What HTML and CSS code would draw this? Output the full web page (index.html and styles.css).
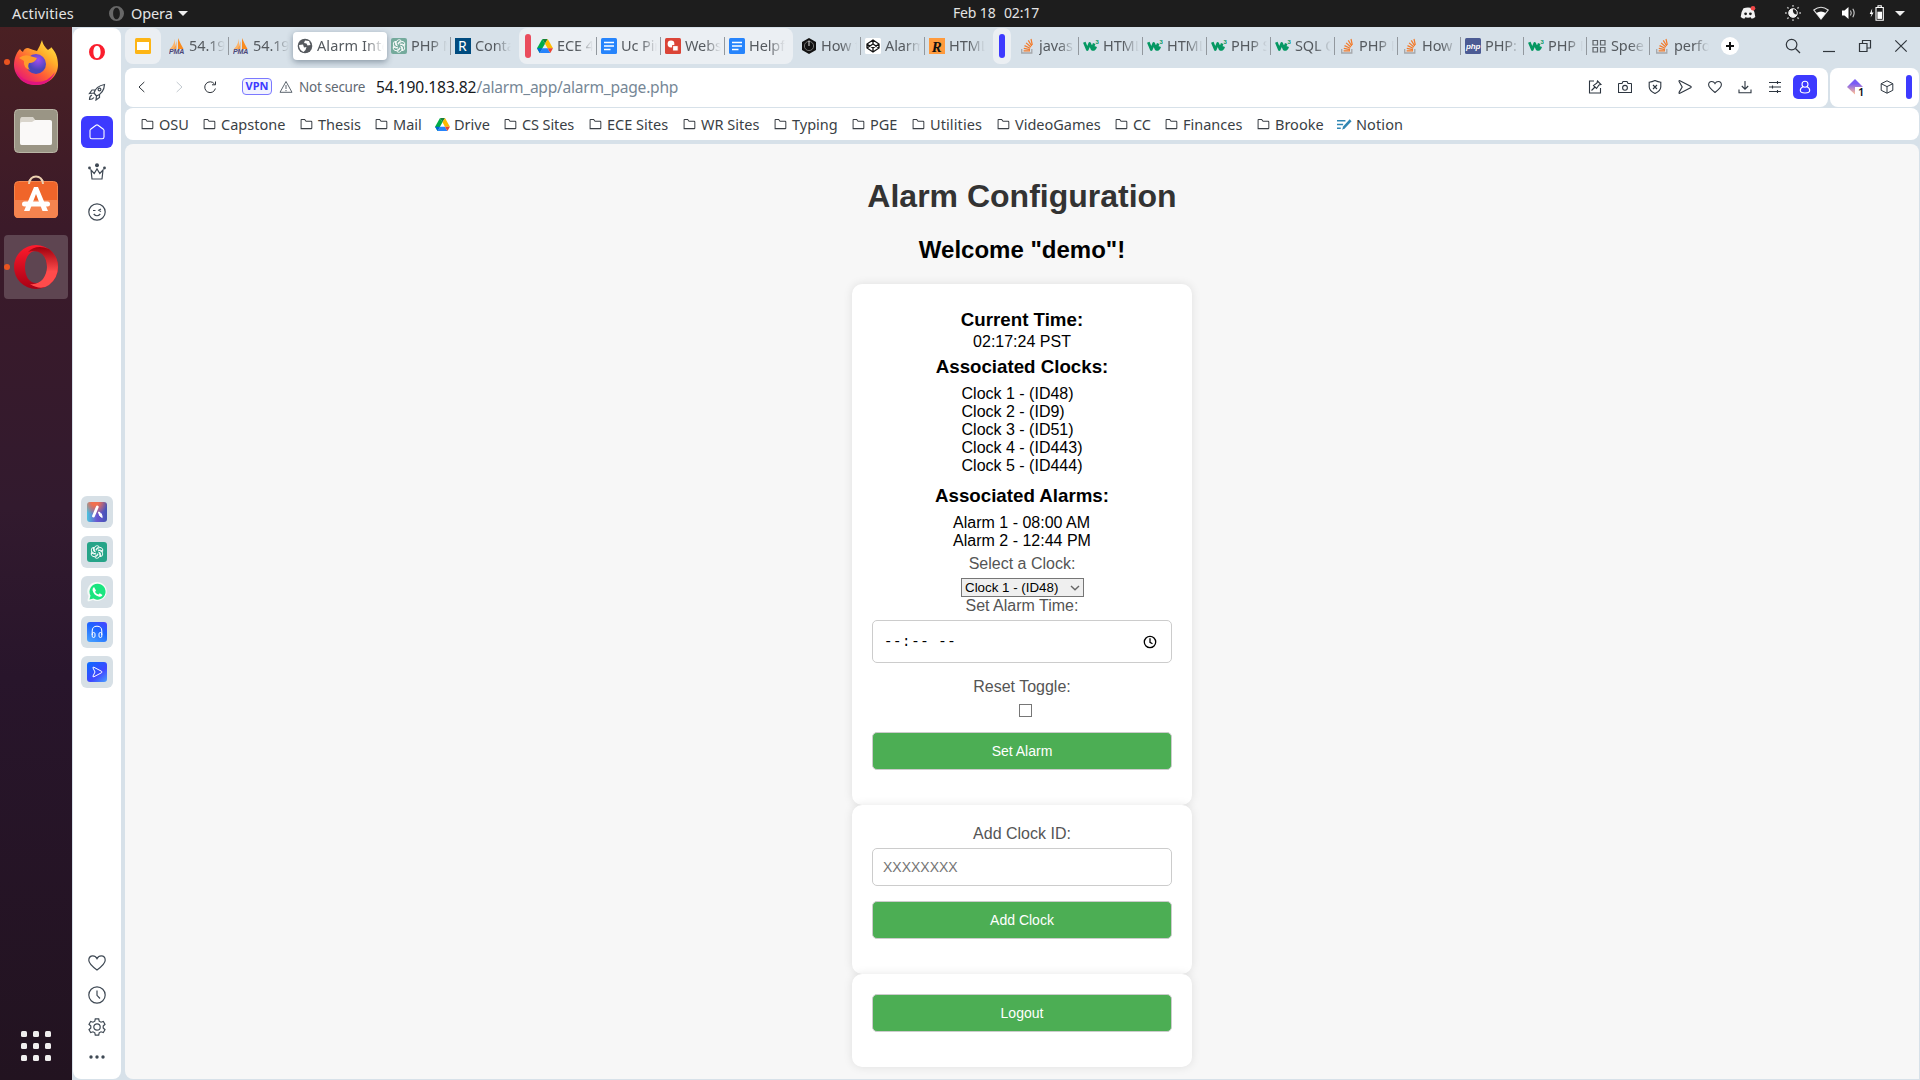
FILE: index.html
```html
<!DOCTYPE html>
<html lang="en">
<head>
<meta charset="utf-8">
<title>Alarm Interface</title>
<link rel="stylesheet" href="styles.css">
</head>
<body>
<svg class="defs" width="0" height="0">
  <defs>
    <linearGradient id="fx" x1="1" y1="0" x2="0.2" y2="1"><stop offset="0" stop-color="#fff44f"/><stop offset=".35" stop-color="#ffb02a"/><stop offset=".65" stop-color="#ff5a36"/><stop offset="1" stop-color="#e3107e"/></linearGradient>
    <radialGradient id="fxb" cx=".6" cy=".3"><stop offset="0" stop-color="#a04df0"/><stop offset="1" stop-color="#4a45b8"/></radialGradient>
    <linearGradient id="op" x1="0" y1="0" x2="0" y2="1"><stop offset="0" stop-color="#ff1b2d"/><stop offset="1" stop-color="#a70014"/></linearGradient>
    <linearGradient id="op2" x1="0" y1="0" x2="0" y2="1"><stop offset="0" stop-color="#a0000e"/><stop offset=".6" stop-color="#ff4b4b"/></linearGradient>
    <linearGradient id="kite" x1="0" y1="0" x2="0" y2="1"><stop offset=".3" stop-color="#7a5cf5"/><stop offset=".9" stop-color="#f5b69c"/></linearGradient>
    <symbol id="folder" viewBox="0 0 13 12"><path d="M.6 10.4V1.3Q.6.6 1.3.6H4.5L6 2.4H11.5Q12.3 2.4 12.3 3.2V9.7Q12.3 10.5 11.5 10.5H.6Z" fill="none" stroke="#3a3f45" stroke-width="1.1"/></symbol>
    <symbol id="drive" viewBox="0 0 16 14"><path d="M5.3 0H10.7L8 4.7Z" fill="#188038"/><path d="M5.3 0L0 9.3 2.7 14 8 4.7Z" fill="#00ac47"/><path d="M10.7 0L16 9.3H10.6L8 4.7Z" fill="#ffba00"/><path d="M0 9.3H5.4L2.7 14Z" fill="#0066da"/><path d="M5.4 9.3H10.6L13.3 14H2.7Z" fill="#2684fc"/><path d="M10.6 9.3H16L13.3 14Z" fill="#ea4335"/></symbol>
    <symbol id="pma" viewBox="0 0 16 16"><path d="M6 1Q5 7 .8 11H6Z" fill="#fbb46b"/><path d="M9 0V11H14.5Q12 7 9 0Z" fill="#f98b1e"/><path d="M7.5 3V11H4Q7 8 7.5 3Z" fill="#f6a04c"/><text x="0" y="15.6" class="pma-text">PMA</text></symbol>
    <symbol id="docs" viewBox="0 0 16 16"><rect width="16" height="16" rx="1.5" fill="#2684fc"/><path d="M3 4.5H13M3 8H13M3 11.5H9.5" stroke="#fff" stroke-width="1.7"/></symbol>
    <symbol id="draw" viewBox="0 0 16 16"><rect width="16" height="16" rx="1.5" fill="#db4437"/><circle cx="6" cy="6" r="3.4" fill="#fff"/><rect x="7.6" y="7.6" width="5.6" height="5.4" fill="#fff" stroke="#db4437"/></symbol>
    <symbol id="gpt" viewBox="0 0 16 16"><g fill="none" stroke="#fff" stroke-width=".9"><path d="M5.3 8V4.300A2.800 2.800 0 0 1 10.200 2.700L7.700 4.300V6.500"/><path d="M5.3 8V4.300A2.800 2.800 0 0 1 10.200 2.700L7.700 4.300V6.500" transform="rotate(60 8 8)"/><path d="M5.3 8V4.300A2.800 2.800 0 0 1 10.200 2.700L7.700 4.300V6.500" transform="rotate(120 8 8)"/><path d="M5.3 8V4.300A2.800 2.800 0 0 1 10.200 2.700L7.700 4.300V6.500" transform="rotate(180 8 8)"/><path d="M5.3 8V4.300A2.800 2.800 0 0 1 10.200 2.700L7.700 4.300V6.500" transform="rotate(240 8 8)"/><path d="M5.3 8V4.300A2.800 2.800 0 0 1 10.200 2.700L7.700 4.300V6.500" transform="rotate(300 8 8)"/></g></symbol>
    <symbol id="stack" viewBox="0 0 14 16"><path d="M1.7 11V15H11.8V11" fill="none" stroke="#a5a7aa" stroke-width="1.3"/><path d="M3.6 12.9H10M3.8 10.3L10 11.6M4.5 7.6L10.2 10.2M6.1 4.9L10.9 9M8.3 2.4L11.7 8M11 1L12.3 7" stroke="#f27a2a" stroke-width="1.2"/></symbol>
    <symbol id="w3" viewBox="0 0 16 16"><path d="M1.300 4.200L4.300 11.500 6.700 5.500 9 11 11.200 5.500M9 11Q11.500 12.500 12.700 8.500" fill="none" stroke="#059862" stroke-width="2.700" stroke-linejoin="round"/><text x="12.600" y="5.600" class="w3-text">3</text></symbol>
    <symbol id="opera" viewBox="0 0 16 16"><path fill-rule="evenodd" d="M8 0A8 8 0 1 0 8 16A8 8 0 1 0 8 0ZM8 1.8C10.3 1.8 11.6 4.6 11.6 8S10.3 14.2 8 14.2 4.4 11.4 4.4 8 5.7 1.8 8 1.8Z"/></symbol>
    <symbol id="heart" viewBox="0 0 18 16"><path d="M9 15C5 12 .8 8.7.8 5.2.8 2.500 2.600.9 4.800.9 6.700.9 8.100 1.900 9 3.600 9.900 1.900 11.300.9 13.200.9 15.400.9 17.200 2.500 17.200 5.200 17.200 8.700 13 12 9 15Z"/></symbol>
    <symbol id="send" viewBox="0 0 14 14"><path d="M1.200 1.800Q.5 0 2.400.9L12.600 6.200Q13.800 7 12.600 7.700L2.400 13Q.5 14 1.200 12.100L4.200 7Z"/></symbol>
  </defs>
</svg>

<header class="topbar">
  <span class="activities">Activities</span>
  <span class="appmenu"><svg class="o-gray" viewBox="0 0 16 16"><use href="#opera"/></svg><span class="appname">Opera</span><i class="caret"></i></span>
  <span class="clock"><span>Feb 18</span><span>02:17</span></span>
  <span class="tray">
    <svg class="t-discord" viewBox="0 0 16 14"><path d="M3.5 2.2Q8 .8 12.5 2.2 15.2 6 15.3 11 13.5 12.6 11.6 12.8L10.8 11.3Q8 12 5.2 11.3L4.4 12.8Q2.5 12.6.7 11 .8 6 3.5 2.2Z" fill="#f2f2f2"/><circle cx="5.600" cy="7.800" r="1.400" fill="#1d1d1d"/><circle cx="10.400" cy="7.800" r="1.400" fill="#1d1d1d"/><circle cx="13" cy="2.300" r="2.300" fill="#f04747"/></svg>
    <svg class="t-sun" viewBox="0 0 16 16"><circle cx="8" cy="8" r="4.300" fill="none" stroke="#f2f2f2"/><path d="M8 3.700A4.300 4.300 0 1 0 12.200 9.500Q7 9.500 8 3.700Z" fill="#f2f2f2"/><path d="M8 0V1.800M8 14.200V16M0 8H1.800M14.200 8H16M2.300 2.300L3.600 3.600M12.400 12.400L13.700 13.700M2.300 13.700L3.600 12.400M12.400 3.600L13.700 2.300" stroke="#bbb" stroke-width="1.400"/></svg>
    <svg class="t-wifi" viewBox="0 0 16 14"><path d="M.8 4Q8-1.600 15.200 4L8 13Z" fill="none" stroke="#ddd" stroke-width="1.100"/><path d="M3.300 7Q8 4 12.700 7L8 13Z" fill="#fff"/></svg>
    <svg class="t-vol" viewBox="0 0 16 14"><path d="M1 4.500H3.500L7.500 1V13L3.500 9.500H1Z" fill="#fff"/><path d="M9.500 4.500Q11 7 9.500 9.500M11.800 2.800Q14.500 7 11.800 11.200" fill="none" stroke="#ccc" stroke-width="1.100"/></svg>
    <svg class="t-bat" viewBox="0 0 16 16"><path d="M3.200 3.500L.7 9H2.500L1.600 12.500 4.600 7.500H2.800Z" fill="#fff"/><path d="M7 2.500H14.300V15.300H7ZM9 .8H12.300V2.500H9Z" fill="none" stroke="#fff" stroke-width="1.100"/><rect x="8.400" y="6.700" width="4.600" height="7.200" fill="#fff"/></svg>
    <i class="caret t-caret"></i>
  </span>
</header>

<div class="desktop">
  <nav class="dock">
    <div class="tile running"><svg viewBox="0 0 44 46"><path d="M28 1C29 6 31 8 34 11 37 9 37 9 37 8 42 13 44 19 44 26 44 37 34 46 22 46S0 37 0 26C0 20 2 14 6 10Q7 12 9 13 10 9 14 9 19 11 23 12 26 7 28 1Z" fill="url(#fx)"/><circle cx="22" cy="25" r="10" fill="url(#fxb)"/><path d="M5 19Q10 15 16 17L23 19Q21 24 15 24 13 28 16 31 9 29 10 22Q7 20 5 19Z" fill="#ff9b2b"/><path d="M2 32Q8 43 22 43 35 43 41 33 36 46 22 46 6 46 2 32Z" fill="#e0157f"/></svg></div>
    <div class="tile"><svg viewBox="0 0 44 44"><rect x=".5" y=".5" width="43" height="43" rx="4" fill="#9a9585" stroke="#b9b5a5"/><path d="M6 12Q6 8 8 8H19L22 12H36Q38 12 38 14V34Q38 36 36 36H8Q6 36 6 34Z" fill="#d9d5cc"/><path d="M6 15Q6 13 8 13H18L21 11H36Q38 11 38 13V34Q38 36 36 36H8Q6 36 6 34Z" fill="#faf9f8"/></svg></div>
    <div class="tile"><svg viewBox="0 0 44 44"><path d="M15 9C15-1 29-1 29 9" fill="none" stroke="#ecd0b0" stroke-width="2"/><rect x=".5" y="6.500" width="43" height="36" rx="4" fill="#f0652a" stroke="#f4854c"/><path d="M0 25H44V38Q44 43 40 43H4Q0 43 0 38Z" fill="#f5844f"/><path d="M15 9C15 7 16 5 17 4M29 9C29 7 28 5 27 4" fill="none" stroke="#ecd0b0" stroke-width="2"/><path d="M20 12H24L34 36H28.500L22 19 15.500 36H10Z" fill="#fff"/><rect x="8" y="26.500" width="28" height="5" rx="2.500" fill="#fff"/></svg></div>
    <div class="tile running selected"><svg viewBox="0 0 44 44"><path fill-rule="evenodd" d="M22 0A22 22 0 1 0 22 44A22 22 0 1 0 22 0ZM22 6C29 6 33 13 33 22S29 38 22 38 11 31 11 22 15 6 22 6Z" fill="url(#op)"/><path d="M14 7Q22-1 35 4 44 11 44 22 44 33 35 40 27 46 16 39 24 40 29 34 33 28 33 22 33 14 28 9 22 4 14 7Z" fill="url(#op2)"/></svg></div>
    <div class="apps"><i></i><i></i><i></i><i></i><i></i><i></i><i></i><i></i><i></i></div>
  </nav>

  <div class="browser">
    <aside class="sidebar">
      <div class="side-top">
        <svg class="red" viewBox="0 0 16 16"><use href="#opera"/></svg>
        <svg class="line" viewBox="0 0 18 18"><path d="M6 10Q8 3 16.500 1.500 16 10 8.500 13ZM6 10L8.500 13M7 7H4L1.500 10.500 6 10M11.500 11.500V14.500L8 17 8.500 13M4 12Q1.500 13 1.500 16.500 4.500 16.500 6 14.500"/><circle cx="11.500" cy="6.500" r="1.400"/></svg>
        <span class="home"><svg viewBox="0 0 16 16"><path d="M1 6.500Q1 5.800 1.600 5.300L7 1.200Q8 .5 9 1.200L14.400 5.300Q15 5.800 15 6.500V13Q15 14.800 13.200 14.800H2.800Q1 14.800 1 13Z"/></svg></span>
        <svg class="line" viewBox="0 0 18 18"><path d="M3 7L4 16H14L15 7 11.800 10.500 9 6 6.200 10.500Z"/><g fill="#3f4954" stroke="none"><circle cx="9" cy="2.300" r="2"/><circle cx="1.500" cy="5" r="1.400"/><circle cx="16.500" cy="5" r="1.400"/></g></svg>
        <svg class="line" viewBox="0 0 18 18"><circle cx="9" cy="9" r="8.200"/><path d="M5 7.500H7.500M13 6L10.800 7.300 13 8.500M5.700 11Q9 14.500 12.300 11"/></svg>
      </div>
      <div class="side-apps">
        <span><svg class="aria" viewBox="0 0 20 20"><path d="M10.300 5L6.500 14" stroke="#fff" stroke-width="2.800" stroke-linecap="round"/><path d="M11.500 10Q14.800 10.500 15.200 15.500 12 14.500 11.500 10Z" fill="#fff" stroke="#fff" stroke-linejoin="round"/></svg></span>
        <span><svg class="gpt" viewBox="-2 -2 20 20"><use href="#gpt" width="16" height="16"/></svg></span>
        <span><svg viewBox="0 0 20 20"><path d="M10.500 0A9.500 9.500 0 1 1 6 18L0 20 1.500 14A9.500 9.500 0 0 1 10.500 0Z" fill="#f6faf8"/><path d="M10.500 1.700A8 8 0 1 1 6.500 16.600L2.500 17.600 3.500 13.600A8 8 0 0 1 10.500 1.700Z" fill="#19e57f"/><path d="M7 5L9 8.500 8 10Q9.500 12 11.500 12.500L12.800 11.300 15.500 13Q14.500 15.500 11.500 14.500 6.500 13 5.500 8 5.500 6 7 5Z" fill="#fff"/></svg></span>
        <span><svg class="blue" viewBox="0 0 20 20"><path d="M5.200 13V9Q5.200 4.200 10 4.200T14.800 9V13" /><rect x="5.200" y="10.500" width="2.800" height="5" rx="1.400"/><rect x="12" y="10.500" width="2.800" height="5" rx="1.400"/></svg></span>
        <span><svg class="blue play" viewBox="0 0 20 20"><path d="M6 6Q5.600 4.800 7 5.300L14.600 9.300Q15.600 10 14.600 10.700L7 14.700Q5.600 15.200 6 14L8 10Z"/></svg></span>
      </div>
      <div class="side-bottom">
        <svg class="line" viewBox="0 0 18 16"><use href="#heart"/></svg>
        <svg class="line" viewBox="0 0 18 18"><circle cx="9" cy="9" r="8.200"/><path d="M9 4.500V9.300L12 12.500"/></svg>
        <svg class="line" viewBox="0 0 18 18"><path d="M7.300.8H10.700L11.200 3.200 13 4.200 15.300 3.400 17 6.300 15.200 8V10L17 11.700 15.300 14.600 13 13.800 11.200 14.800 10.700 17.200H7.300L6.800 14.800 5 13.800 2.700 14.600 1 11.700 2.800 10V8L1 6.300 2.700 3.400 5 4.200 6.800 3.200Z"/><circle cx="9" cy="9" r="3.200"/></svg>
        <svg class="more" viewBox="0 0 18 4"><circle cx="3" cy="2" r="1.700"/><circle cx="9" cy="2" r="1.700"/><circle cx="15" cy="2" r="1.700"/></svg>
      </div>
    </aside>

    <div class="window">
      <div class="tabs">
        <span class="pinned"><svg viewBox="0 0 16 16"><rect width="16" height="16" rx="1.500" fill="#fdb515"/><rect x="2" y="4" width="12" height="8" fill="#fff"/></svg></span>
        <div class="tab"><svg><use href="#pma"/></svg><b>54.19</b></div>
        <div class="tab nosep"><svg><use href="#pma"/></svg><b>54.19</b></div>
        <div class="tab active"><svg viewBox="0 0 16 16"><circle cx="8" cy="8" r="7.300" fill="#55595e"/><path d="M2 7L6 6.500 7 9.500 9.500 9 8.500 12 6.500 14Q2 12 2 7ZM8 2.500L12 3 13.500 7 10.500 7.500 9.500 5.500 7 5Z" fill="#fff"/></svg><b>Alarm Inte</b></div>
        <div class="tab"><svg class="gptfav" viewBox="0 0 16 16"><use href="#gpt"/></svg><b>PHP M</b></div>
        <div class="tab nosep"><svg viewBox="0 0 16 16"><rect width="16" height="16" fill="#004b7f"/><text x="3" y="13.200" class="r-text">R</text></svg><b>Conta</b></div>
        <div class="group">
          <i class="bar red-bar"></i>
          <div class="tab"><svg class="small"><use href="#drive"/></svg><b>ECE 4</b></div>
          <div class="tab"><svg><use href="#docs"/></svg><b>Uc Pin</b></div>
          <div class="tab"><svg><use href="#draw"/></svg><b>Webs</b></div>
          <div class="tab nosep"><svg><use href="#docs"/></svg><b>Helpf</b></div>
        </div>
        <div class="tab first"><svg viewBox="0 0 16 16"><path d="M8 0L15 4V12L8 16 1 12V4Z" fill="#111"/><circle cx="8" cy="8" r="4.600" fill="#111" stroke="#888" stroke-width=".8"/><path d="M8 2.500V8" stroke="#ddd"/></svg><b>How t</b></div>
        <div class="tab"><svg viewBox="0 0 16 16"><rect width="16" height="16" rx="1.500" fill="#fff"/><path d="M8 2L14 6V10L8 14 2 10V6ZM8 2V6M8 14V10M2 6L8 10 14 6M2 10L8 6 14 10" fill="none" stroke="#111" stroke-width="1.300"/></svg><b>Alarm</b></div>
        <div class="tab nosep"><svg viewBox="0 0 16 16"><rect width="16" height="16" fill="#ff9a3c"/><text x="2.800" y="13.500" class="ri-text">R</text></svg><b>HTML</b></div>
        <span class="pill"><i class="bar"></i></span>
        <div class="tab first"><svg><use href="#stack"/></svg><b>javas</b></div>
        <div class="tab"><svg><use href="#w3"/></svg><b>HTML</b></div>
        <div class="tab"><svg><use href="#w3"/></svg><b>HTML</b></div>
        <div class="tab"><svg><use href="#w3"/></svg><b>PHP S</b></div>
        <div class="tab"><svg><use href="#w3"/></svg><b>SQL C</b></div>
        <div class="tab slim"><svg><use href="#stack"/></svg><b>PHP F</b></div>
        <div class="tab slim"><svg><use href="#stack"/></svg><b>How</b></div>
        <div class="tab slim"><svg viewBox="0 0 16 16"><rect width="16" height="16" rx="1.500" fill="#4b5b94"/><text x="1" y="10.500" class="php-text">php</text></svg><b>PHP:</b></div>
        <div class="tab slim"><svg><use href="#w3"/></svg><b>PHP F</b></div>
        <div class="tab slim"><svg viewBox="0 0 16 16"><path d="M2 2.500H6.500V7H2ZM9.500 2.500H14V7H9.500ZM2 9.500H6.500V14H2ZM9.500 9.500H14V14H9.500Z" fill="none" stroke="#60666c" stroke-width="1.200"/></svg><b>Spee</b></div>
        <div class="tab slim nosep"><svg><use href="#stack"/></svg><b>perfo</b></div>
        <span class="plus"><svg viewBox="0 0 18 18"><path d="M9 5V13M5 9H13" stroke="#111" stroke-width="2"/></svg></span>
        <span class="winctl">
          <svg viewBox="0 0 16 16"><circle cx="6.600" cy="6.600" r="5.300"/><path d="M10.500 10.500L15 15"/></svg>
          <svg viewBox="0 0 16 16"><path d="M2 13.500H14"/></svg>
          <svg viewBox="0 0 16 16"><path d="M2.500 5.500H10V13.500H2.500ZM5.500 5.500V2.500H13.500V10H10"/></svg>
          <svg viewBox="0 0 16 16"><path d="M2.300 2.300L13.700 13.700M13.700 2.300L2.300 13.700"/></svg>
        </span>
      </div>

      <div class="toolbar">
        <div class="address">
          <svg class="nav" viewBox="0 0 14 14"><path d="M9.300 2L4 7 9.300 12"/></svg>
          <svg class="nav off" viewBox="0 0 14 14"><path d="M4.700 2L10 7 4.700 12"/></svg>
          <svg class="nav" viewBox="0 0 14 14"><path d="M11.500 4A5.400 5.400 0 1 0 12.400 8.500M12.500 1.500V4.800H9"/></svg>
          <span class="vpn">VPN</span>
          <svg class="warn" viewBox="0 0 14 14"><path d="M7 1.500L13 12.300H1ZM7 5V9M7 10V11.200"/></svg>
          <span class="insecure">Not secure</span>
          <span class="url">54.190.183.82<span>/alarm_app/alarm_page.php</span></span>
          <span class="tools">
            <svg viewBox="0 0 14 14"><path d="M6 1H1.500V13H12.500V8M9.500 1L13 4.500 11 5 8.500 8.500 5.500 5.500 9 3ZM7 7L3.500 10.500"/></svg>
            <svg viewBox="0 0 14 14"><path d="M1 3.500H4L5 1.500H9L10 3.500H13Q13.500 3.500 13.500 4V12.500H.5V4Q.5 3.500 1 3.500Z"/><circle cx="7" cy="7.800" r="2.400"/></svg>
            <svg viewBox="0 0 14 14"><path d="M7 .6Q10 2 12.800 2.200V7Q12.500 11 7 13.500 1.500 11 1.200 7V2.200Q4 2 7 .6ZM5 5L9 9M9 5L5 9"/></svg>
            <svg viewBox="0 0 14 14"><use href="#send"/></svg>
            <svg class="like" viewBox="0 0 18 16"><use href="#heart"/></svg>
            <svg viewBox="0 0 14 14"><path d="M7 1V9M3.800 6L7 9.200 10.200 6M1 9.500V12.800H13V9.500"/></svg>
            <svg viewBox="0 0 14 14"><path d="M1 2.500H13M1 7H13M1 11.500H13M9.500 1V4M4.500 5.500V8.500M9.500 10V13"/></svg>
            <span class="user"><svg viewBox="0 0 14 14"><circle cx="7" cy="4.200" r="3"/><path d="M5 6.800Q2.300 8 2.300 10.500 2.300 13 7 13T11.700 10.500Q11.700 8 9 6.800"/></svg></span>
          </span>
        </div>
        <div class="ext">
          <span class="kite"><svg viewBox="0 0 16 16"><path d="M8 0L16 8H8V15.500L0 8Z" fill="url(#kite)"/></svg><em>1</em></span>
          <svg class="cube" viewBox="0 0 14 14"><path d="M7 .8L12.800 3.700V10.300L7 13.200 1.200 10.300V3.700ZM1.200 3.700L7 6.600 12.800 3.700M7 6.600V13.200"/></svg>
          <i class="bar"></i>
        </div>
      </div>

      <div class="bookmarks">
        <a><svg><use href="#folder"/></svg>OSU</a><a><svg><use href="#folder"/></svg>Capstone</a><a><svg><use href="#folder"/></svg>Thesis</a><a><svg><use href="#folder"/></svg>Mail</a><a><svg class="wide"><use href="#drive"/></svg>Drive</a><a><svg><use href="#folder"/></svg>CS Sites</a><a><svg><use href="#folder"/></svg>ECE Sites</a><a><svg><use href="#folder"/></svg>WR Sites</a><a><svg><use href="#folder"/></svg>Typing</a><a><svg><use href="#folder"/></svg>PGE</a><a><svg><use href="#folder"/></svg>Utilities</a><a><svg><use href="#folder"/></svg>VideoGames</a><a><svg><use href="#folder"/></svg>CC</a><a><svg><use href="#folder"/></svg>Finances</a><a><svg><use href="#folder"/></svg>Brooke</a><a><svg class="wide" viewBox="0 0 16 12"><path d="M0 2H9M0 6H6.500M0 10H4" stroke="#2f86b3" stroke-width="1.500"/><path d="M13.500.5L15.500 2.500 8.500 10 5.500 11.500 6.500 8Z" fill="#2f86b3"/></svg>Notion</a>
      </div>

      <main class="page">
        <h1>Alarm Configuration</h1>
        <h2>Welcome "demo"!</h2>
        <section class="card alarms">
          <h3>Current Time:</h3>
          <div class="now">02:17:24 PST</div>
          <h3>Associated Clocks:</h3>
          <ul><li>Clock 1 - (ID48)</li><li>Clock 2 - (ID9)</li><li>Clock 3 - (ID51)</li><li>Clock 4 - (ID443)</li><li>Clock 5 - (ID444)</li></ul>
          <h3>Associated Alarms:</h3>
          <ul><li>Alarm 1 - 08:00 AM</li><li>Alarm 2 - 12:44 PM</li></ul>
          <label>Select a Clock:</label>
          <div class="select">Clock 1 - (ID48)<svg viewBox="0 0 10 6"><path d="M1 1L5 4.800 9 1"/></svg></div>
          <label class="tight">Set Alarm Time:</label>
          <div class="field time"><span>--:-- --</span><svg viewBox="0 0 14 14"><circle cx="7" cy="7" r="5.700"/><path d="M7 3.200V7.300L9.500 8.700"/></svg></div>
          <label>Reset Toggle:</label>
          <i class="check"></i>
          <button>Set Alarm</button>
        </section>
        <section class="card add">
          <label>Add Clock ID:</label>
          <input class="field" placeholder="XXXXXXXX">
          <button>Add Clock</button>
        </section>
        <section class="card out"><button>Logout</button></section>
      </main>
    </div>
  </div>
</div>
</body>
</html>
```
FILE: styles.css
```css
* { box-sizing: border-box; }
body { margin: 0; width: 1920px; height: 1080px; overflow: hidden; display: flex; flex-direction: column; font-family: "Noto Sans", sans-serif; font-size: 14.5px; }
svg { display: block; flex: none; }
.defs { position: absolute; }
h1, h2, h3, ul { margin: 0; padding: 0; }

/* desktop top bar */
.topbar { flex: none; height: 27px; background: #1d1d1d; color: #e4e4e4; display: grid; grid-template-columns: 109px 844px 628px 1fr; align-items: center; line-height: 27px; }
.activities { padding-left: 12px; letter-spacing: .15px; }
.appmenu { display: flex; align-items: center; }
.o-gray { width: 15px; height: 15px; margin-right: 7px; fill: #686868; }
.appname { width: 41px; letter-spacing: -.1px; }
.caret { width: 0; height: 0; border: 5px solid transparent; border-top-color: #eee; border-bottom: 0; margin-left: 6px; }
.clock { display: flex; gap: 7px; font-size: 14px; letter-spacing: -.15px; line-height: 25px; padding-bottom: 2px; }
.clock span:first-child { width: 44px; }
.tray { display: flex; align-items: center; padding-left: 159px; padding-bottom: 1px; }
.tray svg { width: 16px; height: 16px; margin-right: 12px; }
.tray .t-discord { margin-right: 29px; }
.tray .t-caret { margin-left: -2px; }

.desktop { flex: 1; display: flex; min-height: 0; }

/* launcher */
.dock { width: 72px; flex: none; display: flex; flex-direction: column; padding: 3px 4px 0; background: linear-gradient(#4a2023 0, #3b1a29 200px, #321a2e 480px, #28152b 650px, #221320); }
.tile { height: 64px; margin-bottom: 5px; display: flex; align-items: center; justify-content: center; border-radius: 4px; position: relative; }
.tile:nth-child(2) { margin-bottom: 2px; }
.tile:nth-child(3) { margin-bottom: 6px; }
.tile svg { width: 44px; height: 46px; }
.tile.selected { background: #5e4551; }
.running::before { content: ""; position: absolute; left: 0; top: 29px; width: 6px; height: 6px; border-radius: 50%; background: #e95420; }
.apps { margin: auto auto 19px; display: grid; grid-template-columns: repeat(3, 6px); gap: 6px; }
.apps i { height: 6px; background: #f0eeee; border-radius: 1.5px; }

/* browser frame */
.browser { flex: 1; display: flex; background: #d7e1e9; padding: 1px; min-width: 0; }
.sidebar { width: 48px; flex: none; background: #fff; border-radius: 8px; display: flex; flex-direction: column; align-items: center; margin-right: 4px; }
.side-top { height: 468px; display: grid; grid-auto-rows: 40px; align-content: start; place-items: center; padding-top: 4px; }
.red { width: 16px; height: 16px; fill: #fa1e2d; }
.line { width: 18px; height: 18px; fill: none; stroke: #3f4954; stroke-width: 1.2; }
.home { width: 32px; height: 32px; border-radius: 6px; background: #3d3aff; display: grid; place-items: center; }
.home svg { width: 16px; height: 16px; fill: none; stroke: #fff; stroke-width: 1.1; }
.side-apps { display: flex; flex-direction: column; gap: 8px; }
.side-apps span { width: 32px; height: 32px; border-radius: 6px; background: #d7e0e6; display: grid; place-items: center; }
.side-apps svg { width: 20px; height: 20px; border-radius: 3px; }
.aria { background: radial-gradient(circle at 40% 0, #f0704e 15%, transparent 55%), linear-gradient(90deg, #4cc5dd, #6a55d0 50%, #4355b5); }
.gpt { background: #26a488; }
.blue { background: linear-gradient(30deg, #4aa5ff, #1c64ff 60%, #4b42ff); fill: none; stroke: #fff; stroke-width: 1; }
.play { background: linear-gradient(140deg, #0a6cff, #3f47ff 60%, #48a0ff); }
.side-bottom { margin-top: auto; padding-bottom: 20px; display: flex; flex-direction: column; align-items: center; gap: 14px; }
.side-bottom .more { width: 18px; height: 4px; margin-top: 5px; fill: #3f4954; }
.window { flex: 1; min-width: 0; display: flex; flex-direction: column; }

/* tabs */
.tabs { height: 40px; flex: none; display: flex; align-items: flex-start; color: #555a5f; line-height: 34px; letter-spacing: -.1px; }
.pinned { width: 36px; height: 36px; border-radius: 8px; background: #ebeff3; display: flex; align-items: center; justify-content: center; margin-right: 4px; }
.pinned svg { width: 16px; height: 16px; }
.tab { width: 64px; flex: none; height: 36px; padding-left: 4px; display: flex; align-items: center; gap: 4px; }
.tab svg { width: 16px; height: 16px; }
.tab b { font-weight: 400; width: 36px; height: 36px; overflow: hidden; white-space: nowrap; -webkit-mask-image: linear-gradient(90deg, #000 55%, transparent); mask-image: linear-gradient(90deg, #000 55%, transparent); }
.tab::after { content: ""; width: 1px; height: 18px; background: #92989e; margin-left: -1px; }
.tab.slim { width: 63px; }
.tab.slim b { width: 35px; }
.tab.nosep::after, .tab.active::after { display: none; }
.tab.active { width: 94px; height: 28px; margin-top: 4px; background: #fff; border-radius: 4px; box-shadow: 0 2px 6px rgba(40, 60, 80, .45); line-height: 26px; }
.tab.active b { width: 67px; height: 28px; letter-spacing: .1px; -webkit-mask-image: linear-gradient(90deg, #000 72%, transparent); mask-image: linear-gradient(90deg, #000 72%, transparent); }
.tab.first { margin-left: 4px; }
.gptfav { background: #74aa9c; border-radius: 2px; }
.group { display: flex; align-items: center; height: 36px; border-radius: 8px; background: #ebeff3; margin-left: 4px; padding: 0 4px 0 6px; }
.bar { width: 6px; height: 24px; border-radius: 3px; background: #3d3aff; display: block; }
.red-bar { background: #ea4c5d; margin-right: 2px; }
.pill { width: 18px; height: 36px; margin-left: 4px; border-radius: 7px; background: #ebeff3; display: grid; place-items: center; }
.plus { width: 18px; height: 18px; margin: 9px 0 0 8px; border-radius: 50%; background: #fff; }
.winctl { display: flex; margin: 10px 10px 0 auto; gap: 20px; }
.winctl svg { width: 16px; height: 16px; fill: none; stroke: #30363c; stroke-width: 1.2; }
.pma-text { font: italic bold 7px "Liberation Sans", sans-serif; fill: #4b4677; }
.w3-text { font: bold 6px "Liberation Sans", sans-serif; fill: #059862; }
.r-text { font: 14px "Noto Sans", sans-serif; fill: #fff; }
.ri-text { font: italic bold 15px "Liberation Serif", serif; fill: #111; }
.php-text { font: italic bold 8px "Liberation Sans", sans-serif; fill: #fff; }

/* toolbar */
.toolbar { height: 39px; flex: none; display: flex; gap: 2px; }
.address { flex: 1; background: #fff; border-radius: 8px; display: flex; align-items: center; padding: 0 11px 2px 10px; }
.nav { width: 14px; height: 14px; margin-right: 23px; fill: none; stroke: #2d333a; stroke-width: 1; }
.nav.off { stroke: #c3cad0; margin-right: 17px; }
.nav.off + .nav { margin-right: 25px; }
.vpn { width: 30px; height: 17px; border: 1.5px solid #7b79ff; border-radius: 4px; color: #3d3aff; font-size: 11px; font-weight: 700; line-height: 14px; text-align: center; margin-right: 7px; background: #f2f3ff; }
.warn { width: 14px; height: 14px; margin-right: 6px; fill: none; stroke: #5c656e; stroke-width: 1; }
.insecure { width: 77px; font-size: 13.5px; letter-spacing: -.25px; color: #5f6973; white-space: nowrap; }
.url { font-size: 15.6px; letter-spacing: -.1px; color: #16191d; white-space: nowrap; }
.url span { color: #768796; letter-spacing: -.26px; }
.tools { margin-left: auto; display: flex; align-items: center; gap: 16px; }
.tools svg { width: 14px; height: 14px; fill: none; stroke: #2d3640; stroke-width: 1.1; }
.tools .like { stroke-width: 1.4; }
.user { width: 24px; height: 24px; border-radius: 5px; background: #3d3aff; display: grid; place-items: center; margin-left: -5px; }
.user svg { stroke: #fff; }
.ext { width: 89px; background: #fff; border-radius: 8px; display: flex; align-items: center; padding: 0 0 2px 17px; }
.kite { width: 16px; position: relative; margin-right: 17px; }
.kite svg { width: 16px; height: 16px; }
.kite em { position: absolute; right: -1px; bottom: -3px; width: 6px; font: 600 11px/12px "Noto Sans", sans-serif; color: #111; }
.cube { width: 14px; height: 14px; fill: none; stroke: #2d3640; margin-right: 12px; }

/* bookmarks */
.bookmarks { height: 32px; flex: none; margin-top: 1px; background: #fff; border-radius: 8px; padding-left: 16px; display: flex; align-items: center; color: #3a3f45; }
.bookmarks a { flex: none; display: flex; align-items: center; gap: 5px; white-space: nowrap; line-height: 32px; }
.bookmarks svg { width: 13px; height: 11px; margin-top: 1px; }
.bookmarks .wide { width: 15px; height: 13px; margin-right: -1px; }
.bookmarks a:nth-child(1) { width: 62px; }
.bookmarks a:nth-child(2) { width: 97px; }
.bookmarks a:nth-child(3) { width: 75px; }
.bookmarks a:nth-child(4) { width: 60px; }
.bookmarks a:nth-child(5) { width: 69px; }
.bookmarks a:nth-child(6) { width: 85px; letter-spacing: -.1px; }
.bookmarks a:nth-child(7) { width: 94px; }
.bookmarks a:nth-child(8) { width: 91px; }
.bookmarks a:nth-child(9) { width: 78px; }
.bookmarks a:nth-child(10) { width: 60px; }
.bookmarks a:nth-child(11) { width: 85px; letter-spacing: .1px; }
.bookmarks a:nth-child(12) { width: 118px; }
.bookmarks a:nth-child(13) { width: 50px; }
.bookmarks a:nth-child(14) { width: 92px; }
.bookmarks a:nth-child(15) { width: 80px; }
.bookmarks a:nth-child(16) { letter-spacing: .1px; }

/* page */
.page { flex: 1; margin-top: 4px; background: #f7f7f7; border-radius: 8px 8px 0 8px; padding-top: 34px; display: flex; flex-direction: column; align-items: center; font: 16px/18px "Liberation Sans", Arial, sans-serif; color: #000; min-height: 0; }
h1 { font-size: 32px; line-height: 36px; color: #333; }
h2 { font-size: 24px; line-height: 28px; margin-top: 22px; }
h3 { font-size: 18.72px; line-height: 21px; }
.card { width: 340px; padding: 20px; background: #fff; border-radius: 10px; box-shadow: 0 0 10px rgba(0, 0, 0, .1); display: flex; flex-direction: column; align-items: center; flex: none; }
.alarms { margin-top: 20px; height: 521px; padding-top: 25px; }
.now { margin: 3px 0 5px; }
ul { list-style: none; }
.alarms h3 + ul { margin: 8px 0 5px; }
.alarms ul + h3 { margin-top: 5px; }
label { color: #555; }
.select { width: 123px; height: 19px; margin: 5px 0 0 1px; border: 1px solid #767676; background: #efefef; font-size: 13.33px; line-height: 17px; padding: 0 3px; display: flex; align-items: center; justify-content: space-between; white-space: nowrap; }
.select svg { width: 10px; height: 6px; fill: none; stroke: #666; stroke-width: 1.4; }
.field { width: 300px; height: 38px; border: 1px solid #ccc; border-radius: 5px; padding: 0 10px; font: 14px "Liberation Sans", Arial, sans-serif; background: #fff; flex: none; }
.time { height: 43px; margin: 5px 0 15px; padding: 0 14px 0 11px; display: flex; align-items: center; justify-content: space-between; font-family: "Liberation Mono", monospace; letter-spacing: .65px; }
.time svg { width: 14px; height: 14px; fill: none; stroke: #000; stroke-width: 1.3; }
.field::placeholder { color: #757575; }
.check { width: 13px; height: 13px; border: 1px solid #767676; background: #fff; margin: 8px 0 15px 7px; }
button { width: 300px; height: 38px; flex: none; background: #4cae54; border: 1px solid #ccc; border-radius: 5px; color: #fff; font: 14px "Liberation Sans", Arial, sans-serif; padding: 0; }
.add { height: 169px; }
.add .field { margin: 5px 0 15px; }
.out { height: 93px; }
```
